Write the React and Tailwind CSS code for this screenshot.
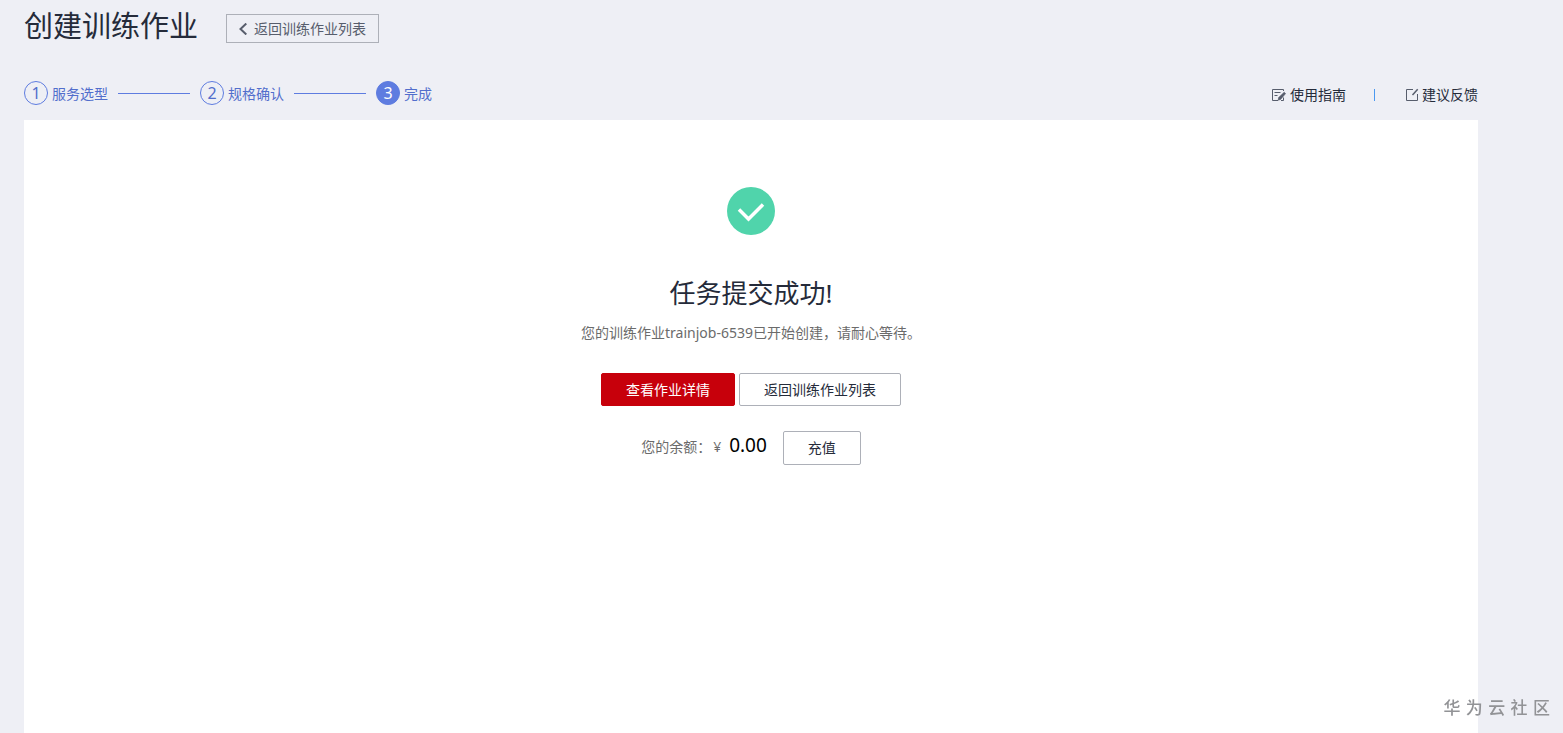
import React from "react";

const steps = [
  { number: 1, label: "服务选型", current: false },
  { number: 2, label: "规格确认", current: false },
  { number: 3, label: "完成", current: true }
];

// Page with a pencil, used for the user guide link
function GuideIcon() {
  return (
    <svg className="w-[15px] h-[14px] text-[#575d6c]" viewBox="0 0 15 14" fill="none" stroke="currentColor" aria-hidden="true">
      <path d="M12.500 3V1.500H1.500V12.500H7" />
      <path d="M3.500 4.500H9.500M3.500 7.500H6.500" />
      <path d="M13.200 4.200L14.600 5.600L9.600 11.400L7.200 12.200L7.600 9.600Z" fill="currentColor" strokeWidth="0.600" />
      <path d="M12.500 9.500V12.500H10" />
    </svg>
  );
}

// Open square with a pen stroke, used for the feedback link
function FeedbackIcon() {
  return (
    <svg className="w-[14px] h-[14px] text-[#575d6c]" viewBox="0 0 14 14" fill="none" stroke="currentColor" aria-hidden="true">
      <path d="M8 1.500H1.500V12.500H12.500V6" />
      <path d="M7.500 7L12.700 1.300" strokeWidth="1.500" />
    </svg>
  );
}

function Steps() {
  return (
    <ol className="flex items-center text-sm text-[#526ecc]">
      {steps.map((step, idx) => (
        <li key={step.number} className="flex items-center" aria-current={step.current ? "step" : undefined}>
          <span
            className={
              step.current
                ? "w-6 h-6 rounded-full border border-[#5e7ce0] bg-[#5e7ce0] text-white flex items-center justify-center text-base"
                : "w-6 h-6 rounded-full border border-[#5e7ce0] flex items-center justify-center text-base"
            }
          >
            {step.number}
          </span>
          <span className="ml-1 pt-0.5">{step.label}</span>
          {idx < steps.length - 1 && <span className="w-[72px] h-px bg-[#5e7ce0] mx-[10px]" />}
        </li>
      ))}
    </ol>
  );
}

export default function App() {
  return (
    <div className="min-h-screen flex flex-col bg-[#eeeff5] pl-6 pr-[85px] text-sm text-[#252b3a] font-['Noto_Sans','Noto_Sans_CJK_SC',sans-serif]">
      {/* Title bar */}
      <header className="flex items-start gap-7 pt-[6px]">
        <h1 className="text-[29px] leading-10">创建训练作业</h1>
        <button
          type="button"
          className="h-[29px] mt-2 px-3 flex items-center gap-[7px] border border-[#adb0b8] text-[#575d6c]"
        >
          <svg className="w-2 h-3" viewBox="0 0 8 12" fill="none" stroke="currentColor" strokeWidth="2" aria-hidden="true">
            <path d="M7.300 0.500L1.500 6L7.300 11.500" />
          </svg>
          返回训练作业列表
        </button>
      </header>

      {/* Progress and help links */}
      <div className="flex items-center justify-between mt-[35px] mb-[15px] h-6">
        <Steps />
        <nav className="flex items-center pt-1 text-[#252b3a]">
          <a href="#guide" className="flex items-center gap-1">
            <GuideIcon />
            使用指南
          </a>
          <span className="w-px h-3 ml-7 mr-[30px] bg-[#4a98f0]" />
          <a href="#feedback" className="flex items-center gap-[3px]">
            <FeedbackIcon />
            建议反馈
          </a>
        </nav>
      </div>

      {/* Result panel */}
      <main className="grow bg-white flex flex-col items-center pt-[67px]">
        <svg className="w-12 h-12" viewBox="0 0 48 48" fill="none" role="img" aria-label="成功">
          <circle cx="24" cy="24" r="24" fill="#50d4ab" />
          <path d="M12 22.500L21.500 32L36 17.500" stroke="#fff" strokeWidth="3.500" />
        </svg>

        <h2 className="mt-10 text-[26px] leading-9">任务提交成功!</h2>
        <p className="mt-3 leading-5 text-[#6b6b6b]">您的训练作业trainjob-6539已开始创建，请耐心等待。</p>

        <div className="flex gap-1 mt-[30px]">
          <button type="button" className="h-[33px] px-6 rounded-xs bg-[#c7000b] border border-[#c7000b] text-white">
            查看作业详情
          </button>
          <button type="button" className="h-[33px] px-6 rounded-xs bg-white border border-[#adb0b8]">
            返回训练作业列表
          </button>
        </div>

        <div className="flex items-start mt-[25px]">
          <p className="flex items-baseline text-[#6b6b6b]">
            <span>您的余额：</span>
            <span className="ml-0.5">¥</span>
            <span className="ml-2 text-[19px] leading-7 text-black">0.00</span>
          </p>
          <button type="button" className="ml-4 h-[34px] px-6 rounded-xs bg-white border border-[#adb0b8]">
            充值
          </button>
        </div>
      </main>

      {/* Community watermark */}
      <div className="fixed right-[13px] bottom-[13px] text-[17px] font-medium text-[#929396] font-['DejaVu_Sans','Noto_Sans_CJK_SC',sans-serif]">
        华 为 云 社 区
      </div>
    </div>
  );
}
